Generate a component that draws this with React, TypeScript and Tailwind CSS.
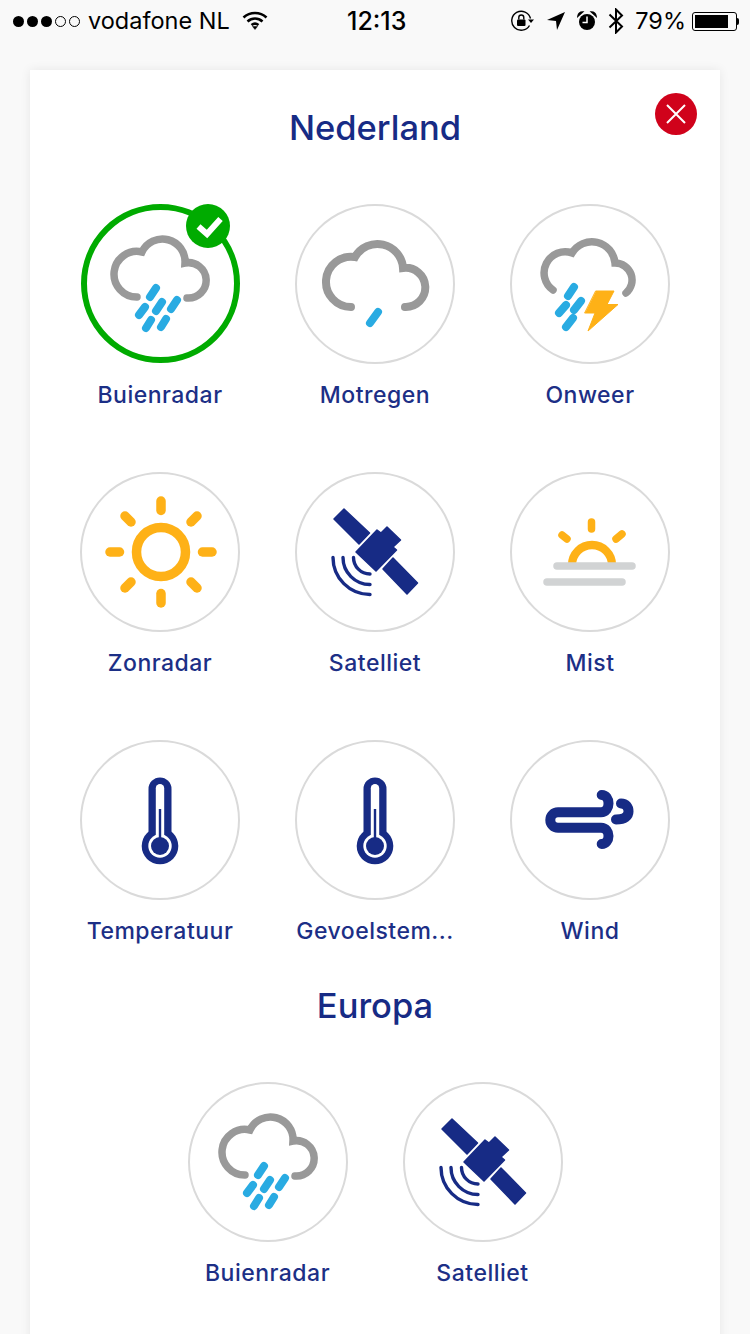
import type { ReactNode } from "react";

const NAVY = "#172b85";
const RAIN = "#29abe2";
const SUN = "#feb117";
const CLOUD = "#999999";

function Svg({ children, shift = 0 }: { children: ReactNode; shift?: number }) {
  return (
    <svg viewBox={`${-shift} 0 160 160`} className="block h-full w-full" fill="none" strokeLinecap="round">
      {children}
    </svg>
  );
}

function Drops({ lines }: { lines: number[][] }) {
  return (
    <g stroke={RAIN} strokeWidth={8}>
      {lines.map(([x1, y1, x2, y2]) => (
        <line key={`${x1}-${y1}`} x1={x1} y1={y1} x2={x2} y2={y2} />
      ))}
    </g>
  );
}

function RainIcon() {
  return (
    <Svg shift={1}>
      <path d="M56 92A22.8 22.8 0 1 1 61 47A22.6 22.6 0 0 1 104 58A17.7 17.7 0 1 1 106 93" stroke={CLOUD} strokeWidth={7.5} />
      <Drops
        lines={[
          [75, 83, 69, 92],
          [64, 102, 58, 110],
          [81, 97, 75, 106],
          [96, 95, 90, 104],
          [70, 115, 65, 123],
          [85, 114, 80, 122],
        ]}
      />
    </Svg>
  );
}

function DrizzleIcon() {
  return (
    <Svg>
      <path d="M56 102A25.15 25.15 0 1 1 60 52A25.7 25.7 0 0 1 108 63A19.6 19.6 0 1 1 110 102" stroke={CLOUD} strokeWidth={8} />
      <line x1={83} y1={107} x2={75} y2={118} stroke={RAIN} strokeWidth={8} />
    </Svg>
  );
}

function StormIcon() {
  return (
    <Svg>
      <path d="M43 85A21 21 0 0 1 62 48A23.2 23.2 0 0 1 105 58A17 17 0 0 1 116 88" stroke={CLOUD} strokeWidth={7.5} />
      <Drops
        lines={[
          [64, 82, 58, 91],
          [56, 100, 49, 108],
          [71, 96, 64, 105],
          [63, 113, 56, 122],
        ]}
      />
      <path d="M86 86H104L97 99.5H108L78 126L85 108H75Z" fill={SUN} stroke={SUN} strokeWidth={1} strokeLinejoin="round" />
    </Svg>
  );
}

function SunIcon() {
  return (
    <Svg shift={1}>
      <g stroke={SUN} strokeWidth={9.5}>
        <circle cx={80} cy={79} r={24.5} />
        <line x1={80} y1={28} x2={80} y2={37.5} />
        <line x1={80} y1={120.5} x2={80} y2={130} />
        <line x1={29} y1={79} x2={38.5} y2={79} />
        <line x1={121.5} y1={79} x2={131} y2={79} />
        <line x1={44} y1={43} x2={50} y2={49} />
        <line x1={116} y1={43} x2={110} y2={49} />
        <line x1={44} y1={115} x2={50} y2={109} />
        <line x1={116} y1={115} x2={110} y2={109} />
      </g>
    </Svg>
  );
}

function SatelliteIcon() {
  return (
    <Svg>
      <g fill={NAVY} stroke={NAVY} strokeWidth={1.5} strokeLinejoin="round">
        <path d="M49 36L74.500 60L64 71L39 46Z" />
        <path d="M98 85L122.500 110L112 121L88 96Z" />
        <path d="M61 79L82 57L86 60L92 54L105.500 67L98 74L101.500 77L81 98Z" />
      </g>
      <g stroke={NAVY} strokeWidth={3.4}>
        <path d="M38 84.500A37 37 0 0 0 75 121.500" />
        <path d="M48 84.500A27 27 0 0 0 75 111.500" />
        <path d="M58.500 84.500A16.500 16.500 0 0 0 75 101" />
      </g>
    </Svg>
  );
}

function FogIcon() {
  return (
    <Svg>
      <path d="M62 92A20 20 0 0 1 102 92" stroke={SUN} strokeWidth={8.3} strokeLinecap="butt" />
      <g stroke={SUN} strokeWidth={7.5}>
        <line x1={81.500} y1={49} x2={81.500} y2={56} />
        <line x1={52} y1={62} x2={57} y2={66} />
        <line x1={112} y1={61} x2={106} y2={66} />
      </g>
      <g stroke="#d1d3d4" strokeWidth={7.5}>
        <line x1={47} y1={93} x2={122} y2={93} />
        <line x1={37} y1={109} x2={112} y2={109} />
      </g>
    </Svg>
  );
}

function ThermometerIcon() {
  return (
    <Svg>
      <rect x={68.500} y={36.500} width={23} height={70} rx={11.500} fill={NAVY} />
      <circle cx={80} cy={105} r={18.300} fill={NAVY} />
      <rect x={75.800} y={43} width={8.400} height={60} rx={4.200} fill="#fff" />
      <circle cx={80} cy={105} r={11.700} fill="#fff" />
      <circle cx={80} cy={105} r={9} fill={NAVY} />
      <rect x={78.800} y={68} width={2.400} height={32} fill={NAVY} />
    </Svg>
  );
}

function WindIcon() {
  return (
    <Svg>
      <g stroke={NAVY} strokeWidth={10}>
        <path d="M91.700 54C96 54 98.500 58 98.500 62.500C98.500 67 96 71.300 91 71.300H48A7.700 7.700 0 0 0 48 86.700H91C96 86.700 98.500 91 98.500 95C98.500 99 96 103 91.700 103" />
        <path d="M111 62.500C116 62.500 118.500 66 118.500 70.500C118.500 75 115 78.500 106 78.500" />
      </g>
    </Svg>
  );
}

function MapTile({
  label,
  active = false,
  children,
}: {
  label: string;
  active?: boolean;
  children: ReactNode;
}) {
  return (
    <div className="flex w-[215px] flex-col items-center">
      <div className="relative h-[160px] w-[160px]">
        <div
          className={`-mt-px rounded-full ${
            active
              ? "ml-px h-[159px] w-[159px] border-[6px] border-[#00ab00]"
              : "h-[160px] w-[160px] border-2 border-[#dadada]"
          }`}
        />
        <div className="absolute inset-0">{children}</div>
        {active && (
          <div className="absolute top-[-1px] right-[10px] h-[44px] w-[44px] rounded-full bg-[#00ab00]">
            <svg viewBox="0 0 44 44" className="h-full w-full" fill="none">
              <path d="M12.500 22.500L21 30L34.500 15" stroke="#fff" strokeWidth={6} />
            </svg>
          </div>
        )}
      </div>
      <div className="mt-4 whitespace-nowrap text-center text-[23px] leading-7 font-medium tracking-[0.5px] text-[#1c2f86]">
        {label}
      </div>
    </div>
  );
}

function SectionTitle({ children }: { children: ReactNode }) {
  return <h2 className="mb-[55px] text-center text-[34.5px] leading-[44px] font-medium text-[#172b85]">{children}</h2>;
}

function StatusBar() {
  return (
    <div className="relative flex h-10 items-center justify-between pt-[2px] pr-[11px] pl-[13px] text-[23.5px] text-black">
      <div className="flex items-center">
        <div className="flex gap-[3px]">
          <span className="h-[11px] w-[11px] rounded-full bg-black" />
          <span className="h-[11px] w-[11px] rounded-full bg-black" />
          <span className="h-[11px] w-[11px] rounded-full bg-black" />
          <span className="h-[11px] w-[11px] rounded-full border border-black" />
          <span className="h-[11px] w-[11px] rounded-full border border-black" />
        </div>
        <span className="ml-[8px]">vodafone NL</span>
        <svg viewBox="0 0 26 20" className="ml-[12px] h-[20px] w-[26px]" fill="none" stroke="#000" strokeWidth={2.600}>
          <path d="M1.500 6.500C8 0.500 18 0.500 24.500 6.500" />
          <path d="M5.500 10.500C10 6.500 16 6.500 20.500 10.500" />
          <path d="M9.500 14C11.500 12.500 14.500 12.500 16.500 14" />
          <path d="M10.500 15.500H15.500L13 18.500Z" fill="#000" strokeWidth={0.500} />
        </svg>
      </div>
      <span className="absolute top-[1px] left-[347px] text-[25px] leading-10 font-medium">12:13</span>
      <div className="flex items-center">
        <svg viewBox="0 0 24 22" className="h-[22px] w-[24px]" fill="none" stroke="#000" strokeWidth={1.400}>
          <path d="M20.500 8.500A9.500 9.500 0 1 0 19.500 15.500" />
          <path d="M18 9.500H24L21 13Z" fill="#000" stroke="none" />
          <rect x={7} y={9.500} width={8.500} height={6.500} rx={1} fill="#000" stroke="none" />
          <path d="M8.800 9.500V7.500A2.500 2.500 0 0 1 13.800 7.500V9.500" />
        </svg>
        <svg viewBox="0 0 20 20" className="ml-[12px] h-[20px] w-[20px]">
          <path d="M19 1L11 19L10 10L1 9Z" fill="#000" />
        </svg>
        <svg viewBox="0 0 20 20" className="ml-[11px] h-[20px] w-[20px]">
          <circle cx={10} cy={11} r={8} fill="#000" />
          <path d="M10 5.500V11.500H5.500" fill="none" stroke="#fff" strokeWidth={1.500} />
          <path d="M1 5C1.500 2.500 3.500 1 5.500 1L1 5ZM19 5C18.500 2.500 16.500 1 14.500 1L19 5Z" fill="#000" stroke="#000" strokeWidth={1.500} />
        </svg>
        <svg viewBox="0 0 16 26" className="ml-[11px] h-[26px] w-[16px]" fill="none" stroke="#000" strokeWidth={2}>
          <path d="M1.500 6.500L14 18.500L8 24.500V1.500L14 7.500L1.500 19.500" />
        </svg>
        <span className="ml-[11px]">79%</span>
        <div className="ml-[6px] flex items-center">
          <div className="h-[19px] w-[45px] rounded-[3px] border border-black p-[2px]">
            <div className="h-full w-[33px] bg-black" />
          </div>
          <div className="h-[7px] w-[2px] rounded-r-full bg-black" />
        </div>
      </div>
    </div>
  );
}

export default function App() {
  return (
    <div
      className="h-[1334px] overflow-hidden bg-[#f9f9f9]"
      style={{ fontFamily: "Inter, 'Noto Sans', sans-serif" }}
    >
      <StatusBar />
      <div className="relative mx-[30px] mt-[30px] h-[1300px] bg-white pt-9 shadow-[0_0_10px_rgba(0,0,0,0.08)]">
        <button className="absolute top-[23px] right-[23px] flex h-[42px] w-[42px] items-center justify-center rounded-full bg-[#d0021b]">
          <svg viewBox="0 0 20 20" className="h-5 w-5" stroke="#fff" strokeWidth={2}>
            <path d="M1 1L19 19M19 1L1 19" />
          </svg>
        </button>

        <SectionTitle>Nederland</SectionTitle>
        <div className="flex flex-wrap justify-center gap-y-16">
          <MapTile label="Buienradar" active>
            <RainIcon />
          </MapTile>
          <MapTile label="Motregen">
            <DrizzleIcon />
          </MapTile>
          <MapTile label="Onweer">
            <StormIcon />
          </MapTile>
          <MapTile label="Zonradar">
            <SunIcon />
          </MapTile>
          <MapTile label="Satelliet">
            <SatelliteIcon />
          </MapTile>
          <MapTile label="Mist">
            <FogIcon />
          </MapTile>
          <MapTile label="Temperatuur">
            <ThermometerIcon />
          </MapTile>
          <MapTile label="Gevoelstem...">
            <ThermometerIcon />
          </MapTile>
          <MapTile label="Wind">
            <WindIcon />
          </MapTile>
        </div>

        <div className="mt-[39px]">
          <SectionTitle>Europa</SectionTitle>
        </div>
        <div className="flex justify-center">
          <MapTile label="Buienradar">
            <RainIcon />
          </MapTile>
          <MapTile label="Satelliet">
            <SatelliteIcon />
          </MapTile>
        </div>
      </div>
    </div>
  );
}
